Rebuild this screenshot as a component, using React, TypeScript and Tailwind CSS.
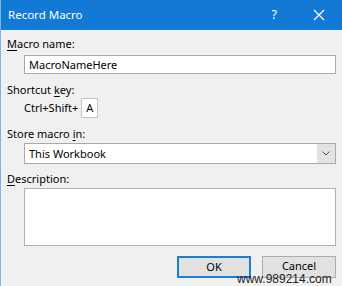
import React from "react";

const font = { fontFamily: '"Noto Sans", "Open Sans", sans-serif' };

function U({ children }: { children: React.ReactNode }) {
  return <span className="underline underline-offset-2 decoration-1">{children}</span>;
}

export default function App() {
  return (
    <div
      className="relative w-[342px] h-[286px] flex flex-col bg-[#f0f0f0] border-l border-[#7fb2e8] overflow-hidden text-[11px] leading-[16px] text-black"
      style={font}
    >
      {/* Title bar */}
      <div className="h-[30px] flex items-center bg-[#1279d4] text-white pl-[7px] shrink-0">
        <span className="text-[11.5px]">Record Macro</span>
        <span className="ml-auto mr-[36px] text-[12.5px]">?</span>
        <svg width="12" height="12" viewBox="0 0 12 12" className="mr-[17px]">
          <path d="M1 1 L11 11 M11 1 L1 11" stroke="white" strokeWidth="1.2" />
        </svg>
      </div>

      {/* Body */}
      <div className="flex flex-col pl-[6px] pr-[6px]">
        <div className="mt-[6px]">
          <U>M</U>acro name:
        </div>
        <div className="mt-[3px] ml-[17px] h-[19px] bg-white border border-[#a9a9a9] flex items-center pl-[4px]">
          MacroNameHere
        </div>

        <div className="mt-[8px]">
          Shortcut <U>k</U>ey:
        </div>
        <div className="ml-[17px] flex items-center h-[20px]">
          <span>Ctrl+Shift+</span>
          <div className="ml-[3px] w-[17px] h-[20px] bg-white border border-[#c4c4c4] flex items-center justify-center">
            A
          </div>
        </div>

        <div className="mt-[8px]">
          Store macro <U>i</U>n:
        </div>
        <div className="mt-[1px] ml-[17px] h-[21px] bg-white border border-[#a9a9a9] flex items-center">
          <span className="pl-[4px]">This Workbook</span>
          <div className="ml-auto h-full w-[18px] bg-[#e3e3e3] flex items-center justify-center">
            <svg width="8" height="5" viewBox="0 0 8 5">
              <path d="M0.5 0.5 L4 4 L7.5 0.5" stroke="#555" strokeWidth="1" fill="none" />
            </svg>
          </div>
        </div>

        <div className="mt-[7px]">
          <U>D</U>escription:
        </div>
        <div className="mt-[1px] ml-[17px] h-[58px] bg-white border border-[#b0b0b0]" />

        <div className="mt-[10px] flex justify-end gap-[11px]">
          <button className="w-[74px] h-[22px] bg-[#e1e1e1] border-2 border-[#1a7fd8] flex items-center justify-center leading-[14px]">
            OK
          </button>
          <button className="w-[74px] h-[22px] bg-[#e1e1e1] border border-[#adadad] flex items-start justify-center pt-[2px] leading-[14px]">
            Cancel
          </button>
        </div>
      </div>

      {/* watermark */}
      <span
        className="absolute left-[236px] top-[273px] text-[12px] leading-[12px] text-[#222]"
        style={{ fontFamily: '"Liberation Sans", Arial, sans-serif' }}
      >
        www.989214.com
      </span>
    </div>
  );
}
